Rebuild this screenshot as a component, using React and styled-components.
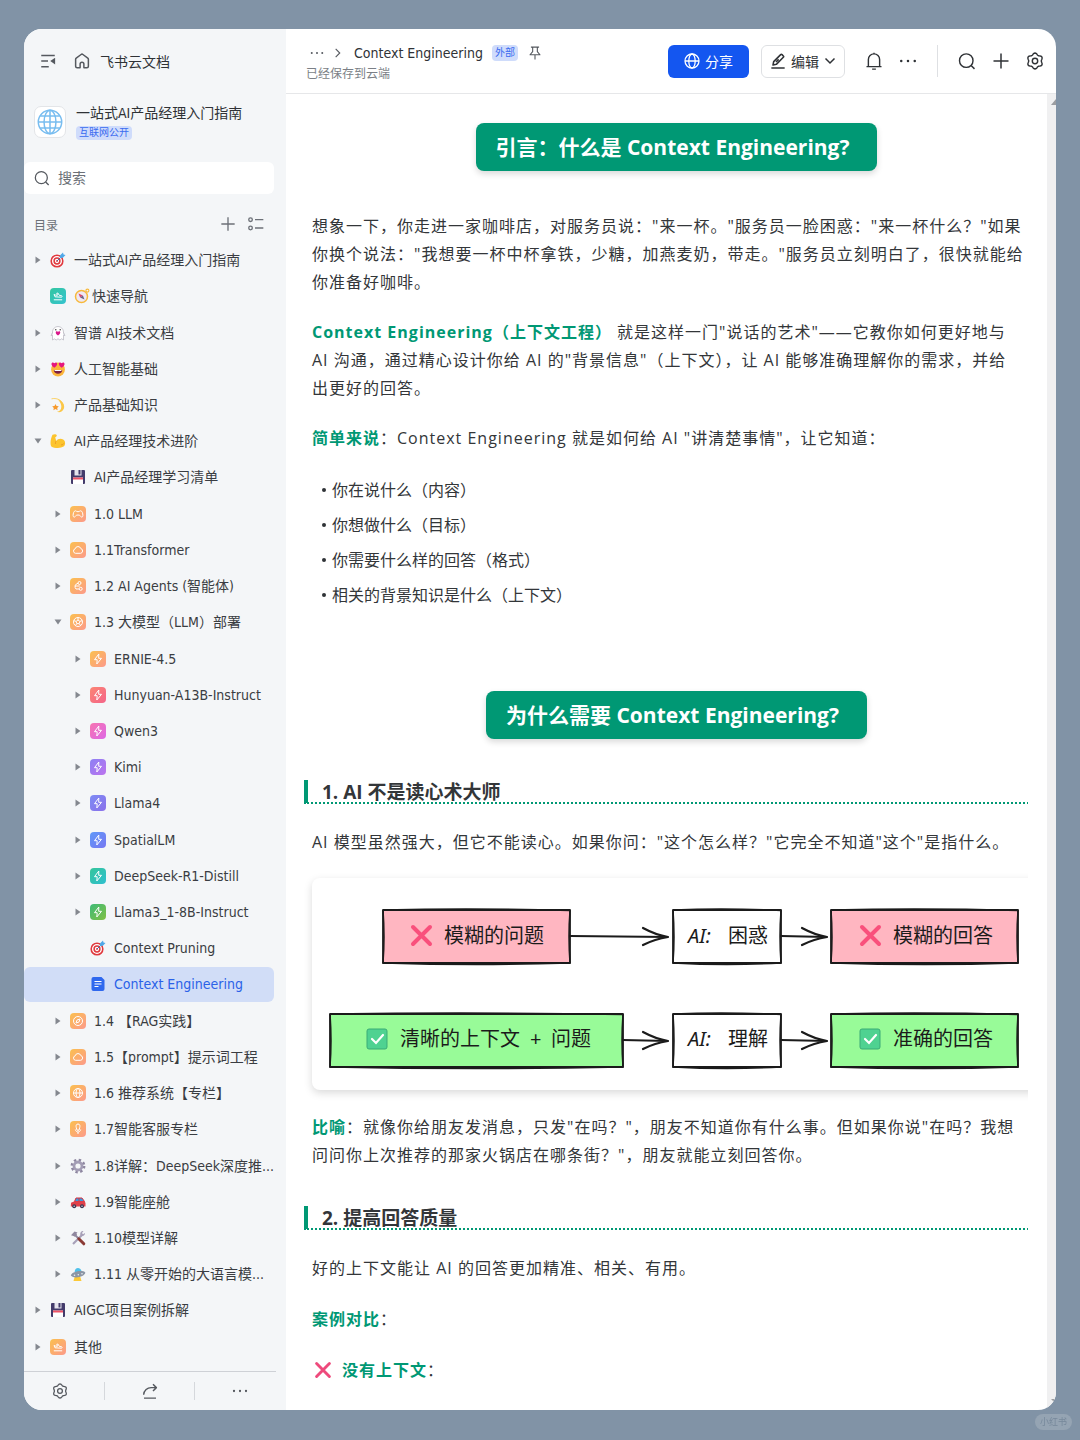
import React from 'react';
import styled, { createGlobalStyle } from 'styled-components';

const GlobalStyle = createGlobalStyle`
  * {
    box-sizing: border-box;
  }
  body {
    margin: 0;
    background: #8193a6;
    color: #2f3236;
    font-family: 'DejaVu Sans Condensed', 'Noto Sans CJK SC', sans-serif;
    font-size: 14px;
  }
  h1, h2, h3, p, ul {
    margin: 0;
    padding: 0;
    font-weight: normal;
  }
  button, input {
    font: inherit;
    color: inherit;
    border: 0;
    background: none;
    padding: 0;
  }
  svg {
    display: block;
    flex: none;
  }
`;

/* ---------- line icons ---------- */

const Line = ({ size = 18, w = 1.6, children, ...rest }) => (
  <svg width={size} height={size} viewBox="0 0 24 24" fill="none" stroke="currentColor" strokeWidth={w} {...rest}>
    {children}
  </svg>
);

const CollapseIcon = () => (
  <Line size={18} w={2}>
    <path d="M3 4.500h18M3 12h9M3 19.500h10" />
    <path d="M21.500 7.500v9L15 12z" fill="currentColor" stroke="none" />
  </Line>
);
const HomeIcon = () => (
  <Line size={18} w={2} strokeLinejoin="round">
    <path d="M10 21H5.500A2 2 0 0 1 3.500 19V9.800a2 2 0 0 1 .8-1.600l6.500-4.900a2 2 0 0 1 2.400 0l6.500 4.900a2 2 0 0 1 .8 1.600V19a2 2 0 0 1-2 2H14" />
    <path d="M9.500 21v-5a2.500 2.500 0 0 1 5 0v5" />
  </Line>
);
const SearchIcon = ({ size = 18 }) => (
  <Line size={size} w={1.9}>
    <circle cx="11" cy="11.500" r="9" />
    <path d="M17.500 18l4.500 4.500" />
  </Line>
);
const PlusIcon = ({ size = 18 }) => (
  <Line size={size} w={2}>
    <path d="M12 2v20M2 12h20" />
  </Line>
);
const OutlineIcon = () => (
  <Line size={16} w={2}>
    <circle cx="3.800" cy="5.500" r="2.700" />
    <circle cx="3.800" cy="18" r="2.700" />
    <path d="M10.500 5.500H23M10.500 18H23" />
  </Line>
);

// six soft lobes, one pointing straight up
const GEAR_POINTS = Array.from({ length: 72 }, (_, i) => {
  const a = (i / 72) * Math.PI * 2;
  const r = 9.5 + 1.1 * Math.cos(6 * a);
  return `${(12 + r * Math.sin(a)).toFixed(2)},${(12 - r * Math.cos(a)).toFixed(2)}`;
}).join(' ');

const GearIcon = ({ size = 18 }) => (
  <Line size={size} w={1.900} strokeLinejoin="round">
    <polygon points={GEAR_POINTS} />
    <circle cx="12" cy="12" r="3.600" />
  </Line>
);
const ShareArrowIcon = () => (
  <Line size={18} w={1.900} strokeLinejoin="round">
    <path d="M3.500 17c.5-6 5-9.500 10-9.500h6.500M16 3l4.500 4.500L16 12M4 21.500h16" />
  </Line>
);
const DotsIcon = ({ size = 18 }) => (
  <svg width={size} height={size} viewBox="0 0 24 24" fill="currentColor">
    <circle cx="3" cy="12" r="1.700" />
    <circle cx="12" cy="12" r="1.700" />
    <circle cx="21" cy="12" r="1.700" />
  </svg>
);
const ChevronIcon = () => (
  <Line size={14} w={1.900}>
    <path d="M8 5l7 7-7 7" />
  </Line>
);
const ChevronDownIcon = () => (
  <Line size={12} w={3}>
    <path d="M3 7l9 9 9-9" />
  </Line>
);
const PinIcon = () => (
  <Line size={14} w={1.900} strokeLinejoin="round">
    <path d="M5 2h14M8 2v7.500L3.500 15h17L16 9.500V2M12 15v8" />
  </Line>
);
const GlobeIcon = () => (
  <Line size={16} w={1.900}>
    <circle cx="12" cy="12" r="10.500" />
    <ellipse cx="12" cy="12" rx="4.800" ry="10.500" />
    <path d="M1.500 12h21" />
  </Line>
);
const GlobeLogo = () => (
  <Line size={26} w={1.400}>
    <circle cx="12" cy="12" r="10.800" />
    <ellipse cx="12" cy="12" rx="5.500" ry="10.800" />
    <path d="M12 1.200v21.600M1.200 12h21.600M3 6.500h18M3 17.500h18" />
  </Line>
);
const PencilIcon = () => (
  <Line size={16} w={2.300} strokeLinejoin="round">
    <path d="M4.500 18l1-5L16 2.500a1.500 1.500 0 0 1 2.100 0l1.900 1.900a1.500 1.500 0 0 1 0 2.100L9.500 17z M9 13.500l4-4M2 22.500h20" />
  </Line>
);
const BellIcon = () => (
  <Line size={18} w={1.900}>
    <path d="M2 19.500h20M4.500 19.500V10a7.500 7.500 0 0 1 15 0v9.500M12 2.500V1M9.500 22.800h5" />
  </Line>
);

/* ---------- tree icons ---------- */

const Emoji = ({ size = 16, children }) => (
  <svg width={size} height={size} viewBox="0 0 16 16">
    {children}
  </svg>
);

const Target = () => (
  <Emoji>
    <circle cx="7" cy="9" r="5.800" fill="#fff" stroke="#e0393e" strokeWidth="1.600" />
    <circle cx="7" cy="9" r="2.900" fill="#fff" stroke="#e0393e" strokeWidth="1.500" />
    <circle cx="7" cy="9" r="0.900" fill="#e0393e" />
    <path d="M7 9l5-5" stroke="#3f6fa8" strokeWidth="1" />
    <path d="M9.800 6.200l.4-3L13 .6l.5 2 2 .5-2.600 2.700z" fill="#4fa8e8" />
  </Emoji>
);
const Compass = () => (
  <Emoji>
    <circle cx="7.500" cy="8.500" r="6" fill="#efe8f4" stroke="#f7b93b" strokeWidth="1.500" />
    <circle cx="13.400" cy="2.600" r="1.500" fill="none" stroke="#f7b93b" strokeWidth="1.100" />
    <path d="M4.500 5.500l4.400 2-2.800 2z" fill="#d8486e" />
    <path d="M10.500 11.500L6.100 9.500l2.800-2z" fill="#6a6484" />
  </Emoji>
);
const Ghost = () => (
  <Emoji>
    <path d="M2.500 15V7a5.500 5.500 0 0 1 11 0v8l-1.800-1.200-1.800 1.200L8 13.800 6.200 15l-1.900-1.200z" fill="#fff" stroke="#b5b3bd" strokeWidth="0.700" />
    <path d="M2.500 7.500L1 10.500h1.500M13.500 7.500l1.500 3h-1.500" fill="#fff" stroke="#b5b3bd" strokeWidth="0.700" />
    <circle cx="5.800" cy="4.800" r="0.700" fill="#333" />
    <circle cx="10.200" cy="4.800" r="0.700" fill="#333" />
    <path d="M8 10.500C3.800 7.500 6.500 5 8 6.800 9.500 5 12.200 7.500 8 10.500z" fill="#d9188b" />
  </Emoji>
);
const HeartEyes = () => (
  <Emoji>
    <circle cx="8" cy="8.500" r="6.900" fill="#fbb53c" />
    <path d="M4.300 6.800C-.8 3.600 2 -.2 4.400 2.200 7-.1 9 3.900 4.300 6.800z" fill="#e5177e" />
    <path d="M11.700 6.800C7 3.900 9-.1 11.600 2.200 14-.2 16.800 3.600 11.700 6.800z" fill="#e5177e" />
    <path d="M3.800 9h8.400c0 5-8.400 5-8.400 0z" fill="#7b1f45" />
    <path d="M4.600 9h6.800v1H4.600z" fill="#fff" />
  </Emoji>
);
const Dizzy = () => (
  <Emoji>
    <path d="M1.500 1.800C8 .5 13 4 13.300 9c.1 2-.7 3.500-2.300 4.500" fill="none" stroke="#fbd36a" strokeWidth="1" />
    <path d="M8 2.500c6 2 8.500 8.500 3.500 12-1.500 1-3.500.8-4.500.2 4.500-.7 6.500-6 1-12.200z" fill="#fbc748" />
    <path d="M5.500 7l1 2 2.300.3-1.600 1.600.4 2.300-2.100-1.100-2.100 1.100.4-2.300-1.600-1.600 2.300-.3z" fill="#f79a2b" />
  </Emoji>
);
const Muscle = () => (
  <Emoji>
    <path d="M2.500 1.800c1.700-1 3.700-.8 4.200.3.300 1-.4 1.800-1.500 2.200l1 3.700c1.500-2.200 4.500-3 7-1.400 2.400 1.600 2.500 5.200.4 7-3 2-9.500 1.600-12.300-.2C-.4 10.500 1 5 2.500 1.800z" fill="#fcc42e" />
    <path d="M6.200 8c-.6.8-.9 1.800-.6 3M11 11.800c1.200.2 2.200-.3 2.700-1.300" fill="none" stroke="#e89322" strokeWidth="0.800" />
  </Emoji>
);
const Floppy = () => (
  <Emoji>
    <path d="M1 2a1 1 0 0 1 1-1h12a1 1 0 0 1 1 1v12a1 1 0 0 1-1 1H2a1 1 0 0 1-1-1z" fill="#433b6b" />
    <path d="M4.500 1h7v5.500h-7z" fill="#e6e4ee" />
    <path d="M8.500 1h2v4.500h-2z" fill="#433b6b" />
    <path d="M3 8.500h10V15H3z" fill="#fff" />
    <path d="M3 8.500h10v2H3z" fill="#ef5468" />
  </Emoji>
);
const Cog = () => (
  <Emoji>
    <circle cx="8" cy="8" r="6" fill="none" stroke="#8d86a0" strokeWidth="2.800" strokeDasharray="2.300 2.410" />
    <circle cx="8" cy="8" r="4" fill="none" stroke="#a39db5" strokeWidth="2.800" />
  </Emoji>
);
const Car = () => (
  <Emoji>
    <path d="M4.500 7.500L6 4h6l2.500 3.500z" fill="#3d9be0" stroke="#d8323e" strokeWidth="1" />
    <path d="M9 4v4" stroke="#d8323e" strokeWidth="1" />
    <path d="M1 8.800l3.500-1.600h10L15.500 9v3.500H.8z" fill="#e0404a" />
    <circle cx="4.200" cy="12.300" r="2" fill="#3a3550" />
    <circle cx="12" cy="12.300" r="2" fill="#3a3550" />
    <circle cx="4.200" cy="12.300" r="0.800" fill="#c9c6d4" />
    <circle cx="12" cy="12.300" r="0.800" fill="#c9c6d4" />
  </Emoji>
);
const Tools = () => (
  <Emoji>
    <path d="M3 14l9.500-9.500" stroke="#a7a0b8" strokeWidth="2.200" />
    <path d="M10.500 5.500c-1-3 1-4.800 3-4.500L12 3l1 1.200 2-1.200c.4 2-2 4-4.500 2.500z" fill="#a7a0b8" />
    <path d="M5 5l4 4" stroke="#8f889f" strokeWidth="1.800" />
    <path d="M1 5.200L4.500 1.500l3 1-1 1L7 5 4.800 6.800 3.500 6z" fill="#8f889f" />
    <path d="M8.800 8.800l5 5" stroke="#8a3a35" strokeWidth="3" strokeLinecap="round" />
  </Emoji>
);
const Ufo = () => (
  <Emoji>
    <path d="M5 9.500L3.500 15h8l-1.500-5z" fill="#fcc937" />
    <path d="M4.700 6c-.2-5.500 6.500-5.500 7 0z" fill="#4fc0ea" />
    <path d="M.8 9.500C2 5 13 3.600 15.300 6.500 15.500 10.500 4 13.500.8 9.500z" fill="#8b95a5" />
    <circle cx="4.500" cy="9.300" r="0.800" fill="#e9edf2" />
    <circle cx="8.300" cy="8.800" r="0.800" fill="#e9edf2" />
    <circle cx="12" cy="7.800" r="0.800" fill="#e9edf2" />
  </Emoji>
);
const DocIcon = () => (
  <Emoji>
    <path d="M1.500 3a2 2 0 0 1 2-2h8l3 3v9a2 2 0 0 1-2 2h-9a2 2 0 0 1-2-2z" fill="#2f68ee" />
    <path d="M4.500 5.500h7M4.500 8h7M4.500 10.500h4" stroke="#fff" strokeWidth="1.100" />
  </Emoji>
);
const Cross = ({ size = 18 }) => (
  <Emoji size={size}>
    <path d="M2.300 2.300l11.400 11.400M13.700 2.300L2.300 13.700" stroke="#ee4a7c" strokeWidth="2.600" strokeLinecap="round" />
  </Emoji>
);

const GLYPHS = {
  plane: <path d="M3.800 11.800h8.400M4 6.500l1 2.300 6.500.4c.8-.2.900-1.200 0-1.500l-2-.2L7.800 5l-1 .2.600 2.100-1.800-.2z" />,
  game: <path d="M5.500 4.800c.8 0 .8.900 2.500.9s1.700-.9 2.500-.9c1.800 0 2.400 2.800 2.400 4.700 0 1.800-1.400 2.100-2.300.8C10.200 9.700 9.800 9 8 9s-2.200.7-2.600 1.300c-.9 1.300-2.300 1-2.300-.8 0-1.900.6-4.700 2.400-4.700z" />,
  cloud: <path d="M5.500 11.300a2.300 2.300 0 0 1-.3-4.500 2.900 2.900 0 0 1 5.600-.2 2.400 2.400 0 0 1-.2 4.700z" />,
  nodes: (
    <>
      <circle cx="9.500" cy="5" r="1.500" />
      <circle cx="10.700" cy="10.800" r="1.500" />
      <path d="M8 5.300A3.400 3.400 0 0 0 6 11h3.200M4.800 8h5" />
    </>
  ),
  ball: (
    <>
      <circle cx="8" cy="8" r="4.500" />
      <path d="M8 6l1.900 1.400-.7 2.200H6.800l-.7-2.200zM8 6V3.500M9.900 7.400l2.300-.8M9.200 9.600l1.400 2M6.800 9.600l-1.400 2M6.100 7.400l-2.300-.8" />
    </>
  ),
  bolt: <path d="M8.800 3L4.500 8.700h2.700L6.800 13l4.700-5.700H8.700z" />,
  compass: (
    <>
      <circle cx="8" cy="8" r="4.500" />
      <path d="M10 6L9 9l-3 1 1-3z" />
    </>
  ),
  globe: (
    <>
      <circle cx="8" cy="8" r="4.500" />
      <ellipse cx="8" cy="8" rx="2" ry="4.500" />
      <path d="M3.500 8h9" />
    </>
  ),
  mic: <path d="M8 3c2 0 2.200 2 1.700 3.700L9 9.200H7l-.7-2.500C5.800 5 6 3 8 3zM5.300 8.500c.4 1.800 1.500 2.500 2.700 2.500s2.300-.7 2.700-2.500M8 11v2" />,
};

const Tile = styled.span`
  display: block;
  flex: none;
  border-radius: 4px;
  background: linear-gradient(135deg, ${(p) => p.$from}, ${(p) => p.$to});
`;

const TileIcon = ({ glyph, from = '#fbc04e', to = '#fc9a8c' }) => (
  <Tile $from={from} $to={to}>
    <svg width="16" height="16" viewBox="0 0 16 16" fill="none" stroke="#fff" strokeWidth="1" strokeLinejoin="round">
      {GLYPHS[glyph]}
    </svg>
  </Tile>
);

/* ---------- data ---------- */

const TREE = [
  { level: 0, caret: 'right', icon: <Target />, text: '一站式AI产品经理入门指南' },
  { level: 0, icon: <TileIcon glyph="plane" from="#33c6a0" to="#35c3d0" />, extra: <Compass />, text: '快速导航' },
  { level: 0, caret: 'right', icon: <Ghost />, text: '智谱 AI技术文档' },
  { level: 0, caret: 'right', icon: <HeartEyes />, text: '人工智能基础' },
  { level: 0, caret: 'right', icon: <Dizzy />, text: '产品基础知识' },
  { level: 0, caret: 'down', icon: <Muscle />, text: 'AI产品经理技术进阶' },
  { level: 1, icon: <Floppy />, text: 'AI产品经理学习清单' },
  { level: 1, caret: 'right', icon: <TileIcon glyph="game" />, text: '1.0 LLM' },
  { level: 1, caret: 'right', icon: <TileIcon glyph="cloud" />, text: '1.1Transformer' },
  { level: 1, caret: 'right', icon: <TileIcon glyph="nodes" />, text: '1.2 AI Agents (智能体)' },
  { level: 1, caret: 'down', icon: <TileIcon glyph="ball" />, text: '1.3 大模型（LLM）部署' },
  { level: 2, caret: 'right', icon: <TileIcon glyph="bolt" />, text: 'ERNIE-4.5' },
  { level: 2, caret: 'right', icon: <TileIcon glyph="bolt" from="#fb8573" to="#f4658a" />, text: 'Hunyuan-A13B-Instruct' },
  { level: 2, caret: 'right', icon: <TileIcon glyph="bolt" from="#f774b0" to="#dd68e6" />, text: 'Qwen3' },
  { level: 2, caret: 'right', icon: <TileIcon glyph="bolt" from="#8c80f4" to="#bd74ee" />, text: 'Kimi' },
  { level: 2, caret: 'right', icon: <TileIcon glyph="bolt" from="#7d8cf4" to="#8b70ea" />, text: 'Llama4' },
  { level: 2, caret: 'right', icon: <TileIcon glyph="bolt" from="#5f98f8" to="#7878f2" />, text: 'SpatialLM' },
  { level: 2, caret: 'right', icon: <TileIcon glyph="bolt" from="#35c59a" to="#2fbfd0" />, text: 'DeepSeek-R1-Distill' },
  { level: 2, caret: 'right', icon: <TileIcon glyph="bolt" from="#3dbb78" to="#82c044" />, text: 'Llama3_1-8B-Instruct' },
  { level: 2, icon: <Target />, text: 'Context Pruning' },
  { level: 2, icon: <DocIcon />, text: 'Context Engineering', active: true },
  { level: 1, caret: 'right', icon: <TileIcon glyph="compass" />, text: '1.4 【RAG实践】' },
  { level: 1, caret: 'right', icon: <TileIcon glyph="cloud" />, text: '1.5【prompt】提示词工程' },
  { level: 1, caret: 'right', icon: <TileIcon glyph="globe" />, text: '1.6 推荐系统【专栏】' },
  { level: 1, caret: 'right', icon: <TileIcon glyph="mic" />, text: '1.7智能客服专栏' },
  { level: 1, caret: 'right', icon: <Cog />, text: '1.8详解：DeepSeek深度推...' },
  { level: 1, caret: 'right', icon: <Car />, text: '1.9智能座舱' },
  { level: 1, caret: 'right', icon: <Tools />, text: '1.10模型详解' },
  { level: 1, caret: 'right', icon: <Ufo />, text: '1.11 从零开始的大语言模...' },
  { level: 0, caret: 'right', icon: <Floppy />, text: 'AIGC项目案例拆解' },
  { level: 0, caret: 'right', icon: <TileIcon glyph="plane" />, text: '其他' },
];

/* ---------- layout ---------- */

const Page = styled.div`
  height: 100vh;
  padding: 29px 24px 30px;
`;
const Window = styled.div`
  display: flex;
  height: 100%;
  border-radius: 18px;
  overflow: hidden;
  background: #fff;
`;

const Sidebar = styled.aside`
  display: flex;
  flex-direction: column;
  flex: none;
  width: 262px;
  padding-right: 12px;
  background: #f4f6f8;
`;
const Brand = styled.div`
  display: flex;
  align-items: center;
  gap: 16px;
  height: 64px;
  padding-left: 15px;
  color: #55595f;
`;
const BrandLink = styled.a`
  display: flex;
  align-items: center;
  gap: 9px;
  color: #2f3236;
  text-decoration: none;
  svg {
    color: #55595f;
  }
`;
const Space = styled.div`
  display: flex;
  align-items: center;
  gap: 10px;
  height: 58px;
  padding-left: 10px;
`;
const SpaceLogo = styled.div`
  display: grid;
  place-items: center;
  width: 32px;
  height: 32px;
  border: 1px solid #e3e5e8;
  border-radius: 7px;
  background: #fff;
  color: #78bdf0;
`;
const SpaceName = styled.div`
  display: flex;
  flex-direction: column;
  align-items: flex-start;
  gap: 4px;
  line-height: 18px;
`;
const Tag = styled.span`
  padding: 0 3px;
  border-radius: 4px;
  background: #cfdcfb;
  color: #3a6bf0;
  font-size: 10px;
  line-height: ${(p) => p.$line || 14}px;
`;
const SearchBox = styled.label`
  display: flex;
  align-items: center;
  gap: 8px;
  height: 32px;
  margin-top: 11px;
  padding-left: 10px;
  border-radius: 6px;
  background: #fff;
  color: #55595f;
  input {
    flex: 1;
    min-width: 0;
    outline: 0;
  }
  input::placeholder {
    color: #6c7077;
    opacity: 1;
  }
`;
const TreeHead = styled.div`
  display: flex;
  align-items: center;
  gap: 12px;
  height: 48px;
  padding: 12px 10px 0;
  color: #6c7077;
  font-size: 12px;
  span {
    flex: 1;
  }
`;
const IconButton = styled.button`
  display: grid;
  place-items: center;
  cursor: pointer;
`;
const Tree = styled.ul`
  display: flex;
  flex-direction: column;
  flex: 1;
  list-style: none;
`;
const TreeItem = styled.li`
  flex: 1;
  display: flex;
  padding: 1px 0;
`;
const TreeLink = styled.a`
  flex: 1;
  display: flex;
  align-items: center;
  min-width: 0;
  padding-left: ${(p) => 8 + p.$level * 20}px;
  border-radius: 6px;
  background: ${(p) => (p.$active ? '#d1ddf7' : 'transparent')};
  color: ${(p) => (p.$active ? '#2b62e8' : '#3a3d42')};
  line-height: 20px;
  text-decoration: none;
  white-space: nowrap;
`;
const Caret = styled.span`
  display: grid;
  place-items: center;
  flex: none;
  width: 12px;
  margin-right: 6px;
  color: #84888f;
`;
const ItemText = styled.span`
  display: flex;
  align-items: center;
  gap: 2px;
  margin-left: 8px;
`;
const SideFoot = styled.div`
  display: flex;
  align-items: center;
  height: 39px;
  margin-top: 6px;
  margin-right: -2px;
  border-top: 1px solid #ced1d6;
  color: #55595f;
`;
const FootButton = styled(IconButton)`
  flex: none;
  width: 90px;
  height: 18px;
  & + & {
    border-left: 1px solid #d5d8dc;
  }
  &:first-child {
    width: 80px;
    padding-right: 8px;
  }
`;

const Main = styled.main`
  display: flex;
  flex-direction: column;
  flex: 1;
  min-width: 0;
`;
const TopBar = styled.header`
  display: flex;
  align-items: center;
  flex: none;
  height: 65px;
  padding: 0 12px 0 20px;
  border-bottom: 1px solid #e6e7e9;
`;
const Crumbs = styled.div`
  flex: 1;
  padding-top: 4px;
`;
const CrumbRow = styled.div`
  display: flex;
  align-items: center;
  height: 22px;
  padding-left: 4px;
  color: #55595f;
  svg + span {
    margin-left: 7px;
  }
`;
const CrumbTitle = styled.h1`
  margin: 0 9px;
  color: #2f3236;
  font-size: 14px;
`;
const Saved = styled.div`
  color: #7b7f86;
  font-size: 12px;
  line-height: 20px;
`;
const ShareButton = styled.button`
  display: flex;
  align-items: center;
  justify-content: center;
  gap: 5px;
  width: 81px;
  height: 33px;
  border-radius: 6px;
  background: #1456f0;
  color: #fff;
`;
const EditButton = styled.button`
  display: flex;
  align-items: center;
  justify-content: center;
  gap: 5px;
  width: 84px;
  height: 33px;
  margin-left: 12px;
  border: 1px solid #dee0e3;
  border-radius: 6px;
`;
const BarTools = styled.div`
  display: flex;
  align-items: center;
  gap: 16px;
  margin-left: 20px;
`;
const Divider = styled.span`
  width: 1px;
  height: 32px;
  margin: 0 4px;
  background: #dee0e3;
`;
const PinButton = styled(IconButton)`
  margin-left: 10px;
`;

const Scroller = styled.div`
  display: flex;
  flex: 1;
  min-height: 0;
`;
const Clip = styled.div`
  flex: 1;
  min-width: 0;
  padding-left: 18px;
  margin-right: 19px;
  overflow: hidden;
`;
const Track = styled.div`
  display: flex;
  flex-direction: column;
  justify-content: space-between;
  align-items: flex-end;
  width: 9px;
  padding: 4px 0;
  background: #f0f0f1;
  color: #9b9da1;
`;
const Article = styled.article`
  margin-right: -13px;
  padding: 29px 0 0 8px;
  color: #333639;
  font-family: 'Open Sans', 'Noto Sans CJK SC', sans-serif;
  font-size: 16px;
  line-height: 28px;
`;
const Banner = styled.h2`
  width: fit-content;
  margin: ${(p) => p.$top || 0}px auto 41px;
  padding: 0 28px 0 20px;
  border-radius: 8px;
  background: #009874;
  box-shadow: 0 3px 6px rgba(0, 0, 0, 0.15);
  color: #fff;
  font-size: 21px;
  font-weight: 700;
  line-height: 48px;
  white-space: nowrap;
`;
const Para = styled.p`
  margin-bottom: ${(p) => p.$after || 22}px;
  padding-right: 15px;
  letter-spacing: 1px;
  b {
    color: #009874;
  }
`;
const CrossPara = styled(Para)`
  display: flex;
  align-items: center;
  gap: 10px;
  padding-left: 2px;
`;
const Points = styled.ul`
  margin-top: 24px;
  list-style: none;
  li {
    display: flex;
    align-items: center;
    gap: 6px;
    padding-left: 10px;
  }
  li + li {
    margin-top: 7px;
  }
  li::before {
    content: '';
    width: 4px;
    height: 4px;
    border-radius: 50%;
    background: #2f3236;
  }
`;
const Section = styled.h3`
  height: 24px;
  margin: ${(p) => p.$top || 0}px 0 24px -8px;
  padding-left: 14px;
  border-left: 4px solid #009874;
  border-bottom: 2px dotted #009874;
  font-size: 19px;
  font-weight: 700;
  line-height: 24px;
`;
const Figure = styled.figure`
  height: 212px;
  margin: 0 0 23px;
  border-radius: 8px;
  box-shadow: 0 3px 8px rgba(0, 0, 0, 0.15);
`;
const Watermark = styled.div`
  position: fixed;
  right: 8px;
  bottom: 10px;
  padding: 0 5px;
  border-radius: 9px;
  background: #95a4b3;
  color: #76889b;
  font-size: 9px;
  line-height: 16px;
`;

/* ---------- diagram ---------- */

const NodeBox = ({ x, y, w, fill = '#fff' }) => (
  <g stroke="#1b1b1b" strokeLinejoin="round">
    <path d={`M${x} ${y}h${w}v53h${-w}z`} fill={fill} strokeWidth="1.800" />
    <path
      d={`M${x} ${y}q${w / 2} -2 ${w} .5q-2 26 0 52.500q${-w / 2} 3 ${-w} 0q2 -26 0 -53`}
      fill="none"
      strokeWidth="1.500"
    />
  </g>
);
const Arrow = ({ x1, x2, y }) => (
  <g fill="none" stroke="#1b1b1b" strokeLinecap="round">
    <path d={`M${x1} ${y}L${x2} ${y + 1}`} strokeWidth="2.200" />
    <path d={`M${x2 - 25} ${y - 8}Q${x2 - 12} ${y - 1} ${x2} ${y + 1}Q${x2 - 13} ${y + 3} ${x2 - 25} ${y + 9}`} strokeWidth="2.200" />
  </g>
);
const Check = ({ x, y }) => (
  <g>
    <rect x={x} y={y} width="20" height="20" rx="2" fill="#4fd291" stroke="#3bab77" strokeWidth="1" />
    <path d={`M${x + 5} ${y + 10}l4 4 7-8`} fill="none" stroke="#fff" strokeWidth="2.200" strokeLinecap="round" />
  </g>
);
const Wrong = ({ x, y }) => (
  <path
    d={`M${x} ${y}l17 17M${x + 17} ${y}l-17 17`}
    stroke="#f9507c"
    strokeWidth="4"
    strokeLinecap="round"
  />
);

const DiagramText = styled.text`
  fill: #1b1b1b;
  font-family: 'Noto Sans', 'Noto Sans CJK SC', sans-serif;
  font-size: 20px;
  font-style: ${(p) => (p.$slant ? 'italic' : 'normal')};
`;

const Diagram = () => (
  <svg width="720" height="211" viewBox="0 0 720 211">
    <NodeBox x={71} y={32} w={187} fill="#ffb6c1" />
    <Wrong x={101} y={49} />
    <DiagramText x="132" y="65">模糊的问题</DiagramText>
    <Arrow x1={258} x2={356} y={58} />
    <NodeBox x={361} y={32} w={108} />
    <DiagramText x="376" y="65" $slant>AI:</DiagramText>
    <DiagramText x="416" y="65">困惑</DiagramText>
    <Arrow x1={469} x2={515} y={58} />
    <NodeBox x={519} y={32} w={187} fill="#ffb6c1" />
    <Wrong x={550} y={49} />
    <DiagramText x="581" y="65">模糊的回答</DiagramText>

    <NodeBox x={18} y={136} w={293} fill="#98fb98" />
    <Check x={55} y={151} />
    <DiagramText x="88" y="168">清晰的上下文</DiagramText>
    <DiagramText x="218" y="168">+</DiagramText>
    <DiagramText x="239" y="168">问题</DiagramText>
    <Arrow x1={311} x2={356} y={162} />
    <NodeBox x={361} y={136} w={108} />
    <DiagramText x="376" y="168" $slant>AI:</DiagramText>
    <DiagramText x="416" y="168">理解</DiagramText>
    <Arrow x1={469} x2={515} y={162} />
    <NodeBox x={519} y={136} w={187} fill="#98fb98" />
    <Check x={548} y={151} />
    <DiagramText x="581" y="168">准确的回答</DiagramText>
  </svg>
);

/* ---------- app ---------- */

const CaretMark = ({ dir }) => (
  <svg width="8" height="8" viewBox="0 0 8 8" fill="currentColor">
    <path d={dir === 'down' ? 'M.5 1.500h7L4 6.500z' : 'M1.500 .5v7L6.500 4z'} />
  </svg>
);

function SidePanel() {
  return (
    <Sidebar>
      <Brand>
        <IconButton aria-label="收起"><CollapseIcon /></IconButton>
        <BrandLink href="#home"><HomeIcon />飞书云文档</BrandLink>
      </Brand>
      <Space>
        <SpaceLogo><GlobeLogo /></SpaceLogo>
        <SpaceName>
          <span>一站式AI产品经理入门指南</span>
          <Tag>互联网公开</Tag>
        </SpaceName>
      </Space>
      <SearchBox>
        <SearchIcon size={16} />
        <input type="text" placeholder="搜索" aria-label="搜索" />
      </SearchBox>
      <TreeHead>
        <span>目录</span>
        <IconButton aria-label="新建"><PlusIcon size={16} /></IconButton>
        <IconButton aria-label="大纲"><OutlineIcon /></IconButton>
      </TreeHead>
      <Tree>
        {TREE.map((item) => (
          <TreeItem key={item.text}>
            <TreeLink href="#doc" $level={item.level} $active={item.active}>
              <Caret>{item.caret && <CaretMark dir={item.caret} />}</Caret>
              {item.icon}
              <ItemText>{item.extra}{item.text}</ItemText>
            </TreeLink>
          </TreeItem>
        ))}
      </Tree>
      <SideFoot>
        <FootButton aria-label="设置"><GearIcon size={16} /></FootButton>
        <FootButton aria-label="分享"><ShareArrowIcon /></FootButton>
        <FootButton aria-label="更多"><DotsIcon size={16} /></FootButton>
      </SideFoot>
    </Sidebar>
  );
}

function Header() {
  return (
    <TopBar>
      <Crumbs>
        <CrumbRow>
          <DotsIcon size={14} />
          <span><ChevronIcon /></span>
          <CrumbTitle>Context Engineering</CrumbTitle>
          <Tag $line={16}>外部</Tag>
          <PinButton aria-label="固定"><PinIcon /></PinButton>
        </CrumbRow>
        <Saved>已经保存到云端</Saved>
      </Crumbs>
      <ShareButton><GlobeIcon />分享</ShareButton>
      <EditButton><PencilIcon />编辑<ChevronDownIcon /></EditButton>
      <BarTools>
        <IconButton aria-label="通知"><BellIcon /></IconButton>
        <IconButton aria-label="更多"><DotsIcon /></IconButton>
        <Divider />
        <IconButton aria-label="搜索"><SearchIcon /></IconButton>
        <IconButton aria-label="新建"><PlusIcon /></IconButton>
        <IconButton aria-label="设置"><GearIcon /></IconButton>
      </BarTools>
    </TopBar>
  );
}

function App() {
  return (
    <Page>
      <GlobalStyle />
      <Window>
        <SidePanel />
        <Main>
          <Header />
          <Scroller>
            <Clip>
              <Article>
                <Banner>引言：什么是 Context Engineering?</Banner>
                <Para>
                  想象一下，你走进一家咖啡店，对服务员说："来一杯。"服务员一脸困惑："来一杯什么？"如果你换个说法："我想要一杯中杯拿铁，少糖，加燕麦奶，带走。"服务员立刻明白了，很快就能给你准备好咖啡。
                </Para>
                <Para>
                  <b>Context Engineering（上下文工程）</b> 就是这样一门"说话的艺术"——它教你如何更好地与 AI 沟通，通过精心设计你给 AI 的"背景信息"（上下文），让 AI 能够准确理解你的需求，并给<br />
                  出更好的回答。
                </Para>
                <Para>
                  <b>简单来说</b>：Context Engineering 就是如何给 AI "讲清楚事情"，让它知道：
                </Para>
                <Points>
                  <li>你在说什么（内容）</li>
                  <li>你想做什么（目标）</li>
                  <li>你需要什么样的回答（格式）</li>
                  <li>相关的背景知识是什么（上下文）</li>
                </Points>
                <Banner $top={82}>为什么需要 Context Engineering?</Banner>
                <Section>1. AI 不是读心术大师</Section>
                <Para>AI 模型虽然强大，但它不能读心。如果你问："这个怎么样？"它完全不知道"这个"是指什么。</Para>
                <Figure><Diagram /></Figure>
                <Para>
                  <b>比喻</b>：就像你给朋友发消息，只发"在吗？"，朋友不知道你有什么事。但如果你说"在吗？我想问问你上次推荐的那家火锅店在哪条街？"，朋友就能立刻回答你。
                </Para>
                <Section $top={37}>2. 提高回答质量</Section>
                <Para $after={23}>好的上下文能让 AI 的回答更加精准、相关、有用。</Para>
                <Para $after={23}><b>案例对比</b>：</Para>
                <CrossPara><Cross /><span><b>没有上下文</b>：</span></CrossPara>
              </Article>
            </Clip>
            <Track aria-hidden="true">
              <svg width="6" height="8" viewBox="0 0 6 8" fill="currentColor"><path d="M6 1v6H1z" /></svg>
              <svg width="6" height="8" viewBox="0 0 6 8" fill="currentColor"><path d="M1 1h5v5z" /></svg>
            </Track>
          </Scroller>
        </Main>
      </Window>
      <Watermark>小红书</Watermark>
    </Page>
  );
}

export default App;
